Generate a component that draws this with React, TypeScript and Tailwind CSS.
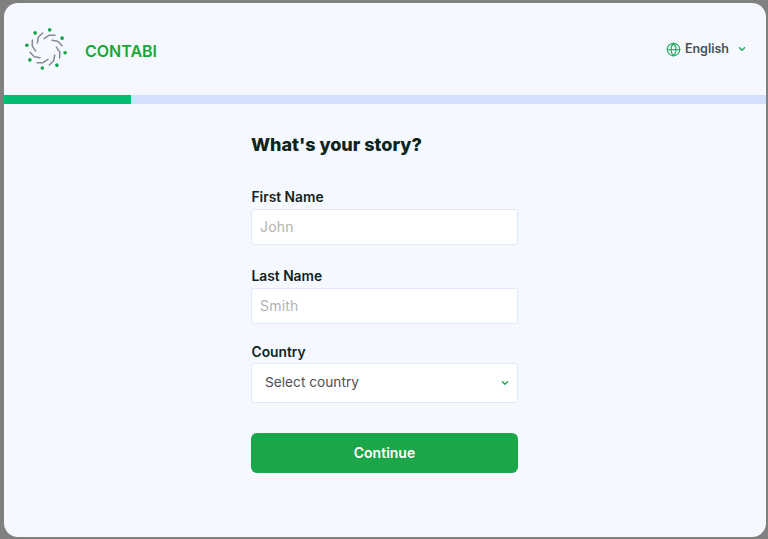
import { Globe, ChevronDown } from "lucide-react";

const ROTATIONS = [0, 45, 90, 135, 180, 225, 270, 315];

function Logo() {
  return (
    <svg width="48" height="48" viewBox="0 0 48 48" fill="none">
      {ROTATIONS.map((deg) => (
        <g key={deg} transform={`rotate(${deg} 24 24)`}>
          <circle cx="27.7" cy="4.9" r="1.8" fill="#16a34a" />
          <path d="M15.3 18 L16.3 12.3 L20.7 8" stroke="#868b90" strokeWidth="1.5" strokeLinecap="round" strokeLinejoin="round" />
        </g>
      ))}
    </svg>
  );
}

function Field({ label, placeholder }: { label: string; placeholder: string }) {
  return (
    <div className="flex flex-col">
      <label className="mb-[3px] pl-[0.5px] text-[13.8px] leading-[18px] font-semibold text-[#10241b]">{label}</label>
      <input
        placeholder={placeholder}
        className="h-[36px] w-full rounded-[3px] border border-[#e1e8fb] bg-white px-2 pb-[2px] text-[14px] tracking-[0.2px] outline-none placeholder:text-[#b3b3b3]"
      />
    </div>
  );
}

export default function App() {
  return (
    <div className="h-[539px] w-[768px] overflow-hidden bg-[#808080] pl-[4px] pr-[2px] pt-[3px] pb-[2px] font-['Inter',sans-serif]">
      <div className="h-full overflow-hidden rounded-[14px] bg-[#f5f8ff]">
        <header className="flex h-[92px] items-center justify-between pl-[18px] pr-[19px]">
          <div className="flex items-center gap-[15px]">
            <Logo />
            <span className="mt-[4px] text-[16px] font-semibold text-[#16a834]">CONTABI</span>
          </div>
          <div className="flex items-center">
            <Globe className="h-[15px] w-[15px] text-[#2bb068]" strokeWidth={2} />
            <span className="ml-[4px] text-[12.5px] font-semibold text-[#4b5058]">English</span>
            <ChevronDown className="ml-[8px] h-[10px] w-[10px] text-[#22a85a]" strokeWidth={3.5} />
          </div>
        </header>

        <div className="h-[9px] bg-[#d2e0fb]">
          <div className="h-full w-[127px] bg-[#00bd70]" />
        </div>

        <main className="ml-[247px] w-[267px] pt-[29px]">
          <h1 className="text-[18px] leading-[24px] font-extrabold text-[#0c2419]">What's your story?</h1>

          <div className="mt-[31px] flex flex-col gap-[22px]">
            <Field label="First Name" placeholder="John" />
            <Field label="Last Name" placeholder="Smith" />
          </div>

          <div className="mt-[19px]">
            <label className="mb-[2px] block pl-[0.5px] text-[13.8px] leading-[18px] font-semibold text-[#10241b]">Country</label>
            <div className="relative">
              <select className="h-[40px] w-full appearance-none rounded-[3px] border border-[#e1e8fb] bg-white pb-[2px] pl-[13px] text-[13.7px] text-[#4f5055] outline-none">
                <option>Select country</option>
              </select>
              <ChevronDown className="absolute right-[8px] top-[15px] h-[10px] w-[10px] text-[#22a85a]" strokeWidth={3.5} />
            </div>
          </div>

          <button className="mt-[30px] h-[40px] w-full rounded-[6px] bg-[#1ca64a] pb-[2px] text-[14px] font-semibold text-white">
            Continue
          </button>
        </main>
      </div>
    </div>
  );
}
